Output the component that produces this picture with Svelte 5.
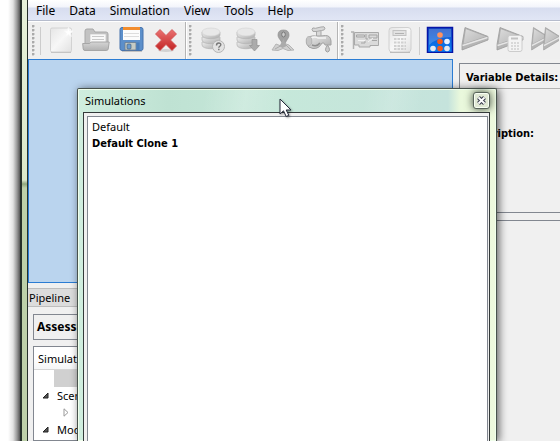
<script>
  const menus = ['File', 'Data', 'Simulation', 'View', 'Tools', 'Help'];
  const groups = [
    ['new', 'open', 'save', 'delete'],
    ['query', 'download', 'locate', 'tap'],
    ['card', 'calculator', '|', 'pipeline', 'run', 'runreport', 'runall']
  ];
  const rows = [
    { name: '', kind: 'blank' },
    { name: 'Scenarios', kind: 'open' },
    { name: '', kind: 'closed' },
    { name: 'Models', kind: 'open' }
  ];
</script>

{#snippet disks()}
  {#each [17, 12, 7] as y}
    <path d="M3 {y}v3c0 5 18 5 18 0v-3z" fill="url(#metal)" stroke="#b5b5b5" stroke-width=".7" />
  {/each}
  <ellipse cx="12" cy="7" rx="9" ry="4" fill="#e8e8e8" stroke="#d2d2d2" stroke-width=".6" />
{/snippet}

{#snippet triangle()}
  <path d="M4 2.500 1 19.500V25L27 15v-3.500z" fill="#b5b5b5" stroke="#9c9c9c" stroke-width=".8" stroke-linejoin="round" />
  <path d="M4.500 3.500 2 19.500 26 11.500z" fill="url(#face)" stroke="#a2a2a2" stroke-width=".7" />
  <path d="M1.500 20.500 26.500 12.500" stroke="#e5e5e5" stroke-width="1.500" />
{/snippet}

{#snippet icon(name)}
  <svg viewBox="0 0 28 28" width="28" height="28" fill="none" aria-hidden="true">
    {#if name === 'new'}
      <rect x="3.500" y="3" width="21" height="24" rx="1.500" fill="url(#paper)" stroke="#d2d2d2" />
      <path d="M4 27.500h20" stroke="#c4c4c4" />
      <path d="m21.500 2.500 1.200 3.200 3.300.3-2.500 2.200.8 3.300-2.800-1.800-2.900 1.800.8-3.300-2.500-2.200 3.300-.3z" fill="#fff" stroke="#f7f7f7" />
    {:else if name === 'open'}
      <path d="M3 19V6q0-2 2-2h6l2 3h11q2 0 2 2v10z" fill="#c2c2c2" stroke="#a8a8a8" />
      <path d="M8 9h16v11H8z" fill="#f9f9f9" stroke="#c2c2c2" stroke-width=".7" />
      <path d="M10 11.500h12M10 14.500h12" stroke="#c9c9c9" />
      <path d="M.7 18.500h7l1.500-1.500h18l-1 7q-.3 1.500-2 1.500H3q-1.500 0-1.800-1.500z" fill="url(#folder)" stroke="#a6a6a6" />
    {:else if name === 'save'}
      <rect x="3" y="2.500" width="23" height="23" rx="2" fill="#5c8fca" stroke="#4673ad" />
      <path d="M6 3h17v12H6z" fill="#fcfcfc" />
      <path d="M6 2h17v3H6z" fill="#f28c2c" />
      <path d="M7 8.500h15M7 11.500h15" stroke="#ddd" />
      <path d="M8 17.500h11V25H8z" fill="#c5cbc5" stroke="#6a7c90" stroke-width=".8" />
      <rect x="10" y="19" width="4" height="5" rx="1" fill="#6b9bd0" stroke="#46617c" stroke-width=".7" />
      <path d="M19.500 17.500h3V25h-3z" fill="#497db9" />
      <path d="M5 26.500h20" stroke="#c2c2c2" />
    {:else if name === 'delete'}
      <ellipse cx="14" cy="25.500" rx="8" ry="1.500" fill="#d2d2d2" />
      <path d="m8 4.500 6 6 6-6 4.500 4.500-6 6 6 6-4.500 4.500-6-6-6 6L3.500 21l6-6-6-6z" fill="url(#red)" stroke="#cf5050" stroke-width=".8" stroke-linejoin="round" />
    {:else if name === 'query'}
      {@render disks()}
      <circle cx="19.500" cy="21.500" r="6" fill="#e3e3e3" stroke="#b5b5b5" />
      <path d="M17.500 20.500q0-2.500 2.200-2.500t2.100 1.800c0 1.500-2 1.500-2 3m0 1v1.500" stroke="#777" stroke-width="1.400" />
    {:else if name === 'download'}
      {@render disks()}
      <path d="M18 14.500h5v6h2.500l-5 5.500-5-5.500H18z" fill="#ababab" stroke="#929292" stroke-width=".7" />
    {:else if name === 'locate'}
      <path d="m3 25 4-6 5 2 5-2 3 1 5 5-6 .5-5-2-5 2z" fill="#d0d0d0" stroke="#b5b5b5" />
      <path d="m6 24 9-5M17 20l5 5" stroke="#aaa" />
      <path d="M9 10q0-5 5.500-5t5.500 5c0 4-3.500 5-4.500 11h-1.500C13 15 9 14 9 10z" fill="#a2a2a2" stroke="#909090" stroke-width=".7" />
      <path d="m10.500 21 4-7 3 7-4 2z" fill="#ababab" />
      <ellipse cx="14.500" cy="9.500" rx="1.800" ry="2.500" fill="#ccc" stroke="#7a7a7a" />
    {:else if name === 'tap'}
      <path d="M8 4.500q0-2.500 3.500-1.200L17 2q4-1 4 1.200T17.500 5.500L12 6.500q-4 .8-4-2zM12.500 6v7h4.500V5.500" fill="#d8d8d8" stroke="#a8a8a8" />
      <path d="M2.500 15q3-5 9-4h5l5-.5q5 0 5.500 5.500v4h-6q-.5-3-3-2-3 6-9 5.500-5-.5-6.500-5z" fill="url(#metal)" stroke="#a2a2a2" />
      <path d="M7 13q4-2 7 0h8" stroke="#f5f5f5" stroke-width="1.500" />
      <ellipse cx="5" cy="16" rx="2.800" ry="4.500" fill="#c6c6c6" stroke="#aaa" stroke-width=".7" />
      <path d="M8 20q5 2 8-2" stroke="#8f8f8f" stroke-width="1.500" />
      <path d="M23.500 20q-4 6 0 7 4-1 0-7z" fill="#ccc" stroke="#a0a0a0" />
    {:else if name === 'card'}
      <path d="M0 7h2.500v17" stroke="#b2b2b2" stroke-width="1.500" />
      <path d="M3.500 7.500h24v13H19V22H8v-2H3.500z" fill="#dadada" stroke="#a9a9a9" />
      <path d="M5.500 10h8v2h-8zM18 10h8v3h-8zM15 9v5h2M21 15.500h5M10 18h4v-2" stroke="#a5a5a5" />
      <path d="M7 15.500h7M17 17l5-4" stroke="#f4f4f4" />
    {:else if name === 'calculator'}
      <rect x="3" y="2.500" width="22" height="24.500" rx="3" fill="url(#paper)" stroke="#d0d0d0" />
      <rect x="7" y="5.500" width="13" height="5" fill="#e2e2e2" stroke="#c2c2c2" />
      <path d="M9 8.500h9" stroke="#b2b2b2" />
      <path d="M8 14h12M8 17.500h12M8 21h12M8 24h12" stroke="#d0d0d0" stroke-width="1.800" stroke-dasharray="2.500 1" />
      <path d="M4 27.500h20" stroke="#bbb" />
    {:else if name === 'pipeline'}
      <rect x="1.500" y="2.500" width="25" height="25" fill="url(#blue)" stroke="#0614a6" stroke-width="1.500" />
      <path d="M3 4h22v8Q12 12 3 20z" fill="#fff" opacity=".2" />
      <circle cx="14" cy="10" r="2.800" fill="#ff925f" />
      <circle cx="14" cy="16.500" r="2.800" fill="#f45a1c" />
      <circle cx="14" cy="23.500" r="2.800" fill="#f45a1c" />
      <circle cx="21" cy="16.500" r="2.800" fill="#eaf2ff" />
      <circle cx="21" cy="23.500" r="2.800" fill="#e4e9f2" />
      <circle cx="7" cy="23.500" r="2.800" fill="#e4e9f2" />
    {:else if name === 'run'}
      {@render triangle()}
    {:else if name === 'runreport'}
      {@render triangle()}
      <rect x="12" y="10.500" width="14" height="16" rx="2" fill="#f3f3f3" stroke="#ccc" />
      <path d="M15 13.500h7" stroke="#c2c2c2" stroke-width="2" />
      <path d="M15 18h8M15 21h8M15 24h8" stroke="#d0d0d0" stroke-dasharray="2 1" stroke-width="1.500" />
    {:else}
      <g transform="scale(.62 1)">{@render triangle()}</g>
      <g transform="translate(12) scale(.62 1)">{@render triangle()}</g>
    {/if}
  </svg>
{/snippet}

<svg class="defs" width="0" height="0" aria-hidden="true">
  <defs>
    <linearGradient id="metal" x2="1" y2="1"><stop stop-color="#eee" /><stop offset="1" stop-color="#ababab" /></linearGradient>
    <linearGradient id="face" x2="1" y2="1"><stop stop-color="#ddd" /><stop offset="1" stop-color="#b2b2b2" /></linearGradient>
    <linearGradient id="paper" x2="1" y2="1"><stop stop-color="#e5e5e5" /><stop offset=".5" stop-color="#f7f7f7" /><stop offset="1" stop-color="#e1e1e1" /></linearGradient>
    <linearGradient id="folder" x2="0" y2="1"><stop stop-color="#d5d5d5" /><stop offset="1" stop-color="#b2b2b2" /></linearGradient>
    <linearGradient id="red" x2="0" y2="1"><stop stop-color="#ea7272" /><stop offset="1" stop-color="#c22424" /></linearGradient>
    <linearGradient id="blue" x2="0" y2="1"><stop stop-color="#164bc4" /><stop offset="1" stop-color="#0780f4" /></linearGradient>
  </defs>
</svg>

<div class="desktop">
  <div class="shade"></div>
  <div class="frame"></div>
  <main>
    <nav>
      {#each menus as menu}<button>{menu}</button>{/each}
    </nav>
    <div class="toolbar">
      {#each groups as group, g}
        <div class="group">
          <i class="grip"></i>
          {#if g === 0}<i class="line"></i>{/if}
          {#each group as name}
            {#if name === '|'}<i class="line"></i>{:else}<button aria-label={name}>{@render icon(name)}</button>{/if}
          {/each}
        </div>
      {/each}
    </div>
    <div class="body">
      <section class="left">
        <div class="canvas"></div>
        <h2>Pipeline</h2>
        <div class="assess">Assessment</div>
        <div class="tree">
          <div class="head">Simulation</div>
          {#each rows as row}
            <div class="row {row.kind}">
              {#if row.kind === 'open'}
                <svg width="7" height="7" aria-hidden="true"><path d="M6 1v5H1z" fill="#555" stroke="#222" /></svg>
              {:else if row.kind === 'closed'}
                <svg width="7" height="9" aria-hidden="true"><path d="M1 .8v7.400L5 4.500z" fill="#fff" stroke="#999" /></svg>
              {/if}
              <span>{row.name}</span>
            </div>
          {/each}
        </div>
      </section>
      <section class="right">
        <div class="details">
          <h3>Variable Details:</h3>
          <p>Description:</p>
        </div>
        <div class="lower"></div>
      </section>
    </div>
  </main>

  <div class="dialog" role="dialog" aria-label="Simulations">
    <header>
      <span>Simulations</span>
      <button aria-label="Close">
        <svg width="9" height="9" aria-hidden="true"><path d="m1.500 1.500 6 6m0-6-6 6" stroke="#3d4050" stroke-width="4" /><path d="m1.500 1.500 6 6m0-6-6 6" stroke="#fff" stroke-width="1.800" /></svg>
      </button>
    </header>
    <div class="client">
      <ul>
        <li>Default</li>
        <li class="current">Default Clone 1</li>
      </ul>
    </div>
  </div>

  <svg class="cursor" width="13" height="20" viewBox="0 0 13 20" aria-hidden="true">
    <path d="M1 1v15l3.500-3.200 2.700 5.700 2.600-1.200-2.600-5.300H12z" fill="#fff" stroke="#24283a" />
  </svg>
</div>

<style>
  :global(body) { margin: 0; background: #fff; }
  * { box-sizing: border-box; }
  button { margin: 0; padding: 0; border: 0; background: none; font: inherit; color: inherit; }
  i { display: block; flex: none; }
  h2, h3, p, ul { margin: 0; padding: 0; font-weight: 400; font-size: 11px; }
  .defs { position: absolute; }
  .desktop {
    position: relative; display: flex; height: 100vh; overflow: hidden;
    font: 11px/17px "Noto Sans", "Open Sans", sans-serif; color: #000;
  }
  .shade { flex: none; width: 20px; background: linear-gradient(90deg, #fff 8px, #e2e2e2 13px, #999 17px, #555); }
  .frame {
    flex: none; width: 8px; border: solid #26302a; border-width: 0 1px 0 2px;
    background: linear-gradient(#e6f1d9, #dbe8ca 180px, #8fa67d 184px, #bdd0a9 188px, #bdd0a9);
  }
  main { flex: 1; min-width: 0; display: flex; flex-direction: column; background: #f0f0f0; }
  nav {
    display: flex; flex: none; height: 21px; padding-left: 1px; border-bottom: 1px solid #b6bccc;
    background: linear-gradient(#fff, #f3f5fb 7px, #d7ddef 8px, #e1e6f5);
    font-size: 12px;
  }
  nav button { padding: 0 7px; height: 20px; }
  .toolbar { display: flex; flex: none; height: 38px; overflow: hidden; border-top: 1px solid #fff; background: #efefef; }
  .group { display: flex; flex: none; align-items: flex-start; padding: 0 2px 0 4px; border-right: 1px solid #b4b4b4; }
  .group + .group { border-left: 1px solid #fff; padding-left: 2px; }
  .grip { align-self: center; width: 3px; height: 31px; margin-right: 3px; background: radial-gradient(circle at 1px 1px, #aaa 1px, transparent 2px) 0 0 / 3px 4px; }
  .line { align-self: center; width: 1px; height: 28px; margin: 0 2px; background: #ccc; }
  .group button { flex: none; width: 35px; height: 34px; display: grid; place-items: center; }
  .body { flex: 1; min-height: 0; display: flex; }
  .left { flex: none; width: 425px; display: flex; flex-direction: column; }
  .canvas { flex: none; height: 224px; border: 1px solid #2b7cd3; background: #bad4ee; }
  h2 { flex: none; height: 19px; margin-top: 5px; padding-left: 1px; border: 1px solid #bdbdbd; border-left: 0; background: #dcdcdc; line-height: 17px; }
  .assess { flex: none; height: 26px; margin: 7px 5px 6px; padding-left: 3px; border: 1px solid #828790; font-size: 12px; font-weight: 700; line-height: 24px; }
  .tree { flex: 1; margin: 0 5px; border: 1px solid #828790; background: #fff; }
  .head { height: 23px; padding-left: 4px; border-bottom: 1px solid #d5d5d5; background: linear-gradient(#fff 50%, #f5f6f7); line-height: 23px; }
  .row { display: flex; align-items: center; height: 17px; padding-left: 8px; gap: 8px; }
  .row.closed { padding-left: 29px; }
  .blank { margin-left: 20px; background: #d0d0d0; }
  .right { flex: 1; min-width: 0; display: flex; flex-direction: column; padding: 4px 0 0 6px; }
  .details { flex: none; height: 150px; padding: 5px 0 5px 6px; border: solid #828790; border-width: 1px 0 1px 1px; white-space: nowrap; }
  h3 { height: 20px; border-bottom: 1px solid #b2b2b2; font: 700 11px/17px "DejaVu Sans Condensed", "DejaVu Sans", sans-serif; }
  p { padding-top: 36px; font: 700 11px/17px "DejaVu Sans Condensed", "DejaVu Sans", sans-serif; }
  .lower { flex: 1; margin-top: 7px; border: solid #828790; border-width: 1px 0 0 1px; }
  .dialog {
    position: absolute; top: 88px; bottom: 0; left: 77px; right: 63px; display: flex; flex-direction: column;
    padding: 0 6px 0 5px; border: 1px solid #48524c; border-bottom: 0; border-radius: 2px 2px 0 0;
    background: linear-gradient(100deg, transparent 30%, #fff3 40%, transparent 50% 68%, #fff2 75%, transparent 82%) 0 0 / 100% 24px no-repeat,
      linear-gradient(90deg, #d0eedf, #bfe2d3 90px, #c6e8da 200px, #c5e3dc 370px, #e9f8dc 382px, #eef9dd);
    box-shadow: inset 0 0 0 1px #f1ffec, 2px 1px 9px #0009;
  }
  header { display: flex; flex: none; height: 23px; justify-content: space-between; align-items: center; padding-left: 2px; }
  header button { width: 17px; height: 17px; display: grid; place-items: center; border: 1px solid #59645a; border-radius: 3px; background: #e1e9d5; box-shadow: inset 0 0 0 1px #f8fff3, 0 0 8px #3a463a; }
  .client { flex: 1; padding: 3px 1px 0 3px; border: 1px solid #343a3a; border-bottom: 0; background: #f0f0f0; }
  ul { height: 100%; padding: 1px 4px; border: 1px solid #828790; border-bottom: 0; background: #fff; list-style: none; line-height: 17px; }
  .current { font: 700 11px/17px "DejaVu Sans Condensed", "DejaVu Sans", sans-serif; }
  .cursor { position: absolute; left: 279px; top: 98px; filter: drop-shadow(1px 1px 1px #0006); }
</style>
